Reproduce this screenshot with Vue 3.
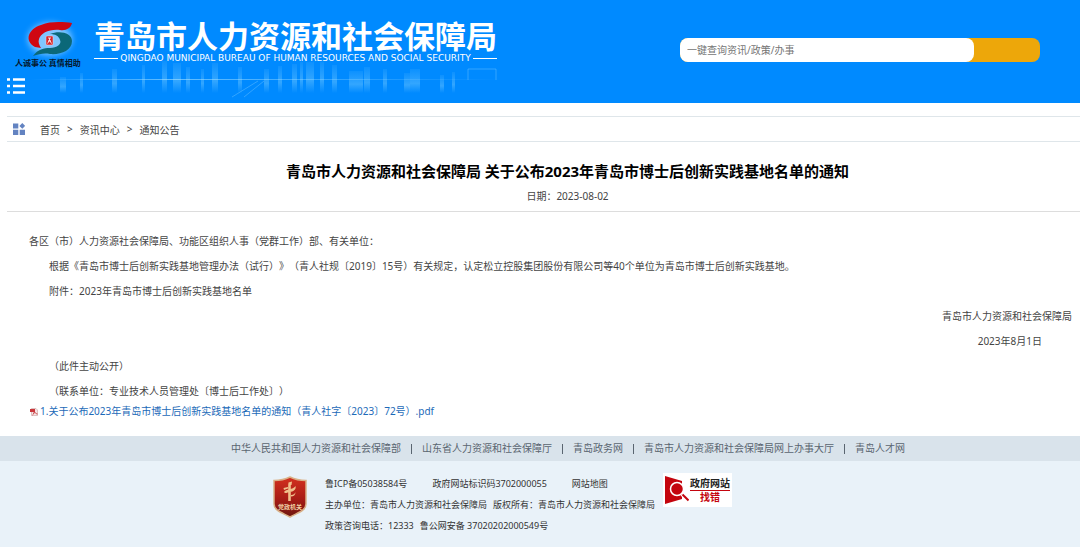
<template>
  <div class="page">
    <header class="header">
      <svg class="skyline" viewBox="0 0 480 50" aria-hidden="true">
        <defs>
          <linearGradient id="tower" x1="0" y1="0" x2="0" y2="1">
            <stop offset="0" stop-color="#7fd0ff" stop-opacity="0.1" />
            <stop offset="0.6" stop-color="#7fd0ff" stop-opacity="0.4" />
            <stop offset="1" stop-color="#7fd0ff" stop-opacity="0" />
          </linearGradient>
          <linearGradient id="shore" x1="0" y1="0" x2="1" y2="0">
            <stop offset="0" stop-color="#a8e2ff" stop-opacity="0" />
            <stop offset="0.3" stop-color="#a8e2ff" stop-opacity="0.6" />
            <stop offset="1" stop-color="#a8e2ff" stop-opacity="0" />
          </linearGradient>
        </defs>
        <rect
          v-for="(tower, index) in towers"
          :key="index"
          :x="tower[0]"
          :y="tower[1]"
          :width="tower[2]"
          :height="40 - tower[1]"
          fill="url(#tower)"
        />
        <rect x="10" y="26" width="470" height="1" fill="url(#shore)" />
        <path
          d="M212 44L238 28M224 44L244 28M448 27V16H476V27"
          fill="none"
          stroke="#8fd6ff"
          stroke-opacity="0.35"
        />
      </svg>
      <div class="header-left">
        <div class="brand">
          <div class="emblem">
            <svg class="emblem-mark" viewBox="22 18 54 40" aria-hidden="true">
              <ellipse class="emblem-glow" cx="50" cy="39" rx="22" ry="16" />
              <path
                fill="#cf0712"
                d="M35 47C24 41 28 29 41 25C51 21 63 22 72 23C71 28 66 31 60 30C49 29 41 33 39 39C38 42 39 45 41 48Z"
              />
              <path
                fill="#0b6878"
                d="M50 34C60 30 72 33 72 41C72 51 60 55 50 54C44 53 39 54 33 56C38 49 44 48 50 48C57 48 62 44 60 40C59 36 55 34 50 34Z"
              />
              <rect x="46" y="36" width="7" height="9" rx="1" fill="#d5252b" stroke="#ffd7d7" stroke-width="0.500" />
              <path
                d="M48 38H51M49.500 38V40L47.500 43.500M49.500 40L51.500 43.500M48 41H51"
                fill="none"
                stroke="#fff"
                stroke-width="0.8"
              />
            </svg>
            <span class="motto">人诚事公 真情相助</span>
          </div>
          <div class="names">
            <span class="name">青岛市人力资源和社会保障局</span>
            <span class="name-en"
              >QINGDAO MUNICIPAL BUREAU OF HUMAN RESOURCES AND SOCIAL
              SECURITY</span
            >
          </div>
        </div>
        <button type="button" class="menu-button" aria-label="菜单">
          <svg viewBox="0 0 18 16" width="18" height="16">
            <path
              d="M0 1.500H3M6 1.500H18M0 8H3M6 8H18M0 14.500H3M6 14.500H18"
              stroke="#fff"
              stroke-width="2.600"
            />
          </svg>
        </button>
      </div>
      <form class="search" @submit.prevent>
        <input
          v-model="keyword"
          type="text"
          class="search-input"
          placeholder="一键查询资讯/政策/办事"
          aria-label="一键查询资讯/政策/办事"
        />
        <button type="submit" class="search-button" aria-label="搜索"></button>
      </form>
    </header>

    <main class="main">
      <nav class="breadcrumb">
        <svg viewBox="0 0 12 12" width="12" height="12" aria-hidden="true">
          <path
            fill="#6383c1"
            d="M0 0.500H5.300V5.500H0ZM0 6.700H5.300V12H0ZM6.700 6.700H12V12H6.700ZM9.300 0L12.200 2.900L9.300 5.800L6.400 2.900Z"
          />
        </svg>
        <template v-for="(crumb, index) in crumbs" :key="crumb">
          <span v-if="index">&gt;</span>
          <a href="#">{{ crumb }}</a>
        </template>
      </nav>

      <div class="heading">
        <h1>青岛市人力资源和社会保障局 关于公布2023年青岛市博士后创新实践基地名单的通知</h1>
        <p>日期：2023-08-02</p>
      </div>

      <article class="article">
        <p>各区（市）人力资源社会保障局、功能区组织人事（党群工作）部、有关单位：</p>
        <p class="indent">
          根据《青岛市博士后创新实践基地管理办法（试行）》（青人社规〔2019〕15号）有关规定，认定松立控股集团股份有限公司等40个单位为青岛市博士后创新实践基地。
        </p>
        <p class="indent">附件：2023年青岛市博士后创新实践基地名单</p>
        <p class="sign">青岛市人力资源和社会保障局</p>
        <p class="sign sign-date">2023年8月1日</p>
        <p class="indent">（此件主动公开）</p>
        <p class="indent">（联系单位：专业技术人员管理处〔博士后工作处〕）</p>
        <a href="#" class="attachment">
          <svg viewBox="0 0 8 8" width="8" height="8" aria-hidden="true">
            <path d="M1.500 0.500H6L7.500 2V7.500H1.500Z" fill="#f5e4e4" stroke="#c9a3a3" stroke-width="0.600" />
            <path d="M0 1H5V4H0Z" fill="#c9383c" />
            <path d="M2.500 7C4 6 4.500 4 4 3C5 5 6 5.800 7.500 6" fill="none" stroke="#c9383c" />
          </svg>
          <span>1.关于公布2023年青岛市博士后创新实践基地名单的通知（青人社字〔2023〕72号）.pdf</span>
        </a>
      </article>
    </main>

    <footer class="footer">
      <nav class="links">
        <template v-for="(link, index) in links" :key="link">
          <i v-if="index" class="divider"></i>
          <a href="#">{{ link }}</a>
        </template>
      </nav>
      <div class="footer-info">
        <a href="#" class="shield" aria-label="党政机关">
          <svg viewBox="0 0 34 42" width="34" height="42">
            <defs>
              <linearGradient id="shield" x1="0" y1="0" x2="0" y2="1">
                <stop offset="0" stop-color="#d3301f" />
                <stop offset="0.550" stop-color="#a81c16" />
                <stop offset="1" stop-color="#6d1710" />
              </linearGradient>
            </defs>
            <path
              d="M17 1C22 3.500 27 4.500 33 4.500V28C33 35 24 37 17 41C10 37 1 35 1 28V4.500C7 4.500 12 3.500 17 1Z"
              fill="url(#shield)"
              stroke="#d9b087"
              stroke-width="1.500"
            />
            <path
              d="M15.500 6.500L19 5.500L18.500 9H17.800V25H15.200V9ZM11 16C13 13 20 14 22.500 10C23.500 14 20 15.500 17 16C14 16.500 12 18 11 16ZM10.500 12L15 11V12.500L11 14ZM18 19C21 19 22 17 22.500 16C22.500 19 20.500 20.500 18 20.500Z"
              fill="#f0c08c"
            />
            <text x="17" y="33" text-anchor="middle" class="shield-text">党政机关</text>
          </svg>
        </a>
        <div class="info">
          <p class="info-wide">
            <a href="#">鲁ICP备05038584号</a>
            <span>政府网站标识码3702000055</span>
            <a href="#">网站地图</a>
          </p>
          <p>
            <span>主办单位：青岛市人力资源和社会保障局</span>
            <span>版权所有：青岛市人力资源和社会保障局</span>
          </p>
          <p>
            <span>政策咨询电话：12333</span>
            <a href="#">鲁公网安备 37020202000549号</a>
          </p>
        </div>
        <a href="#" class="report">
          <svg viewBox="0 0 24 28" width="24" height="28" aria-hidden="true">
            <path d="M0 0L17 5V23L0 28Z" fill="#c4050e" />
            <circle cx="12" cy="13" r="6.500" fill="#c4050e" stroke="#fff" stroke-width="1.500" />
            <path d="M17 18L24 25" stroke="#fff" stroke-width="4" />
            <path d="M17.500 18.500L23.500 24.500" stroke="#c4050e" stroke-width="2" />
          </svg>
          <span class="report-text">
            <span>政府网站</span>
            <span class="report-error">找错</span>
          </span>
        </a>
      </div>
    </footer>
  </div>
</template>

<script setup>
import { ref } from "vue";

const keyword = ref("");

const crumbs = ["首页", "资讯中心", "通知公告"];

const links = [
  "中华人民共和国人力资源和社会保障部",
  "山东省人力资源和社会保障厅",
  "青岛政务网",
  "青岛市人力资源和社会保障局网上办事大厅",
  "青岛人才网",
];

// x, top and width of every tower in the header skyline
const towers = [
  [40, 24, 6],
  [60, 20, 3],
  [92, 16, 5],
  [122, 12, 3],
  [142, 8, 5],
  [153, 10, 8],
  [166, 14, 4],
  [181, 16, 3],
  [192, 10, 6],
  [218, 14, 4],
  [244, 16, 5],
  [258, 13, 4],
  [272, 11, 5],
  [280, 9, 3],
  [286, 9, 8],
  [300, 9, 4],
  [312, 12, 5],
  [329, 18, 14],
  [344, 14, 6],
  [363, 16, 4],
  [384, 20, 6],
  [390, 16, 10],
  [420, 22, 4],
  [432, 19, 3],
];
</script>

<style>
body {
  margin: 0;
  background: #fff;
}
</style>

<style scoped>
.page {
  font-family: "Noto Sans", "Noto Sans CJK SC", sans-serif;
  font-size: 10px;
  color: #444;
  text-spacing-trim: space-all;
}
p,
h1 {
  margin: 0;
}
a {
  color: inherit;
  text-decoration: none;
}
button {
  padding: 0;
  border: 0;
  background: none;
  cursor: pointer;
}
svg {
  display: block;
  flex: none;
}
.header {
  position: relative;
  display: flex;
  justify-content: space-between;
  align-items: flex-start;
  background: #008aff;
  padding: 18px 40px 9px 7px;
}
.skyline {
  position: absolute;
  left: 20px;
  bottom: 0;
  width: 480px;
  height: 50px;
}
.header-left {
  position: relative;
}
.brand {
  display: flex;
  gap: 10px;
  height: 50px;
  padding-left: 8px;
}
.emblem {
  display: flex;
  flex-direction: column;
  width: 69px;
}
.emblem-mark {
  width: 54px;
  height: 40px;
  margin-left: 7px;
  overflow: visible;
}
.emblem-glow {
  fill: #d5efff;
  opacity: 0.6;
  filter: blur(3px);
}
.motto {
  font-family: "Noto Sans CJK SC", sans-serif;
  font-size: 8px;
  line-height: 10px;
  font-weight: bold;
  color: #05182e;
  white-space: nowrap;
}
.names {
  display: flex;
  flex-direction: column;
  color: #fff;
  white-space: nowrap;
}
.name {
  font-family: "Noto Sans CJK SC", sans-serif;
  font-size: 31px;
  line-height: 33px;
  font-weight: bold;
}
.name-en {
  display: flex;
  align-items: center;
  gap: 2px;
  font-family: "DejaVu Sans", sans-serif;
  font-size: 9px;
  line-height: 14px;
}
.name-en::before,
.name-en::after {
  content: "";
  flex: 1;
  height: 1px;
  background: #fff;
}
.menu-button {
  display: block;
  margin-top: 10px;
}
.search {
  display: flex;
  width: 360px;
  margin-top: 20px;
  border-radius: 8px;
  background: #eda70a;
}
.search-input {
  flex: 1;
  min-width: 0;
  height: 24px;
  box-sizing: border-box;
  padding: 0 7px;
  border: 0;
  border-radius: 8px;
  background: #fff;
  font-family: inherit;
  font-size: 10px;
  color: #444;
}
.search-input::placeholder {
  color: #757575;
}
.search-button {
  width: 66px;
}
.main {
  padding: 13px 0 17px 7px;
}
.breadcrumb {
  display: flex;
  align-items: center;
  gap: 7px;
  height: 24px;
  padding-left: 6px;
  border-top: 1px solid #dfe6ea;
  border-bottom: 1px solid #dfe6ea;
}
.breadcrumb svg {
  margin-right: 8px;
}
.heading {
  padding: 17px 0 2px 48px;
  border-bottom: 1px solid #ddd;
  text-align: center;
}
h1 {
  font-size: 15px;
  line-height: 24px;
  color: #000;
}
.heading p {
  line-height: 26px;
}
.article {
  padding: 17px 8px 0 22px;
  line-height: 25px;
}
.indent {
  padding-left: 20px;
}
.sign {
  text-align: right;
}
.sign-date {
  padding-right: 30px;
}
.attachment {
  display: flex;
  align-items: center;
  gap: 2px;
  padding-left: 1px;
  line-height: 15px;
  color: #1c6ab8;
}
.footer {
  min-height: 111px;
  background: #e9f2f9;
}
.links {
  display: flex;
  align-items: center;
  justify-content: center;
  gap: 10px;
  padding-left: 56px;
  line-height: 25px;
  background: #d9e3eb;
  color: #5a6570;
}
.divider {
  width: 1px;
  height: 10px;
  background: #5a6570;
}
.footer-info {
  display: flex;
  align-items: flex-start;
  max-width: 534px;
  margin: 0 auto;
  padding-top: 12px;
}
.shield {
  margin: 3px 18px 0 0;
}
.shield-text {
  font-size: 6px;
  font-weight: bold;
  fill: #f3cfa4;
}
.info {
  font-size: 9px;
  line-height: 21px;
  white-space: nowrap;
  color: #333;
}
.info p {
  display: flex;
  gap: 6px;
}
.info .info-wide {
  gap: 25px;
}
.report {
  display: flex;
  align-items: center;
  gap: 1px;
  margin-left: 8px;
  padding: 3px 2px;
  background: #fff;
}
.report-text {
  display: flex;
  flex-direction: column;
  align-items: center;
  font-weight: bold;
  font-size: 10px;
  line-height: 13px;
  color: #222;
}
.report-error {
  align-self: stretch;
  border-top: 1px solid #c4050e;
  text-align: center;
  color: #c4050e;
}
</style>
